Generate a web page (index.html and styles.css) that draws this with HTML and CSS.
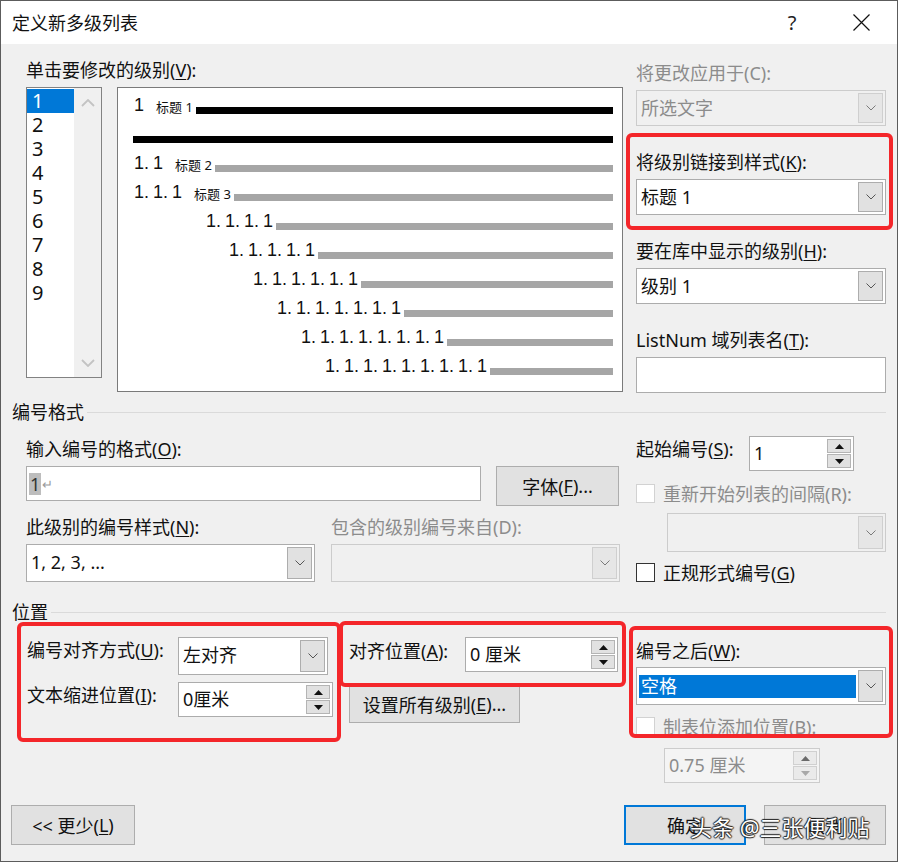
FILE: index.html
```html
<!DOCTYPE html>
<html lang="zh-CN">
<head>
<meta charset="utf-8">
<title>定义新多级列表</title>
<link rel="stylesheet" href="styles.css">
</head>
<body>
<div class="dialog">
  <div class="titlebar">
    <div class="title">定义新多级列表</div>
    <div class="tb-btn help">?</div>
    <div class="tb-btn close"><svg width="17" height="17" viewBox="0 0 17 17"><path d="M0.5 0.5 L16.5 16.5 M16.5 0.5 L0.5 16.5" stroke="#111" stroke-width="1.2" fill="none"/></svg></div>
  </div>

  <div class="content">
    <section class="top">
      <div class="top-left">
        <div class="label">单击要修改的级别(<u>V</u>):</div>
        <div class="top-row">
          <div class="levels">
            <ul class="level-list">
              <li class="sel">1</li><li>2</li><li>3</li><li>4</li><li>5</li><li>6</li><li>7</li><li>8</li><li>9</li>
            </ul>
            <div class="vscroll">
              <svg width="14" height="8" viewBox="0 0 14 8"><path d="M1 7 L7 1 L13 7" fill="none" stroke="#c3c3c3" stroke-width="1.8"/></svg>
              <svg width="14" height="8" viewBox="0 0 14 8"><path d="M1 1 L7 7 L13 1" fill="none" stroke="#c3c3c3" stroke-width="1.8"/></svg>
            </div>
          </div>
          <div class="preview">
            <div class="prow i1"><span class="pnum">1</span><span class="ptag">标题 1</span><span class="bar blk"></span></div>
            <div class="prow i2"><span class="bar blk"></span></div>
            <div class="prow i1"><span class="pnum">1. 1</span><span class="ptag">标题 2</span><span class="bar"></span></div>
            <div class="prow i1"><span class="pnum">1. 1. 1</span><span class="ptag">标题 3</span><span class="bar"></span></div>
            <div class="prow i4"><span class="pnum">1. 1. 1. 1</span><span class="bar"></span></div>
            <div class="prow i5"><span class="pnum">1. 1. 1. 1. 1</span><span class="bar"></span></div>
            <div class="prow i6"><span class="pnum">1. 1. 1. 1. 1. 1</span><span class="bar"></span></div>
            <div class="prow i7"><span class="pnum">1. 1. 1. 1. 1. 1. 1</span><span class="bar"></span></div>
            <div class="prow i8"><span class="pnum">1. 1. 1. 1. 1. 1. 1. 1</span><span class="bar"></span></div>
            <div class="prow i9"><span class="pnum">1. 1. 1. 1. 1. 1. 1. 1. 1</span><span class="bar"></span></div>
          </div>
        </div>
      </div>

      <div class="top-right">
        <div class="fgroup">
          <div class="label dis">将更改应用于(C):</div>
          <div class="combo dis"><span class="val">所选文字</span><span class="dd"><svg width="10" height="6" viewBox="0 0 10 6"><path d="M0.5 0.5 L5 5 L9.5 0.5" fill="none" stroke="#7a7a7a" stroke-width="1"/></svg></span></div>
        </div>
        <div class="fgroup">
          <div class="label">将级别链接到样式(<u>K</u>):</div>
          <div class="combo"><span class="val">标题 1</span><span class="dd"><svg width="10" height="6" viewBox="0 0 10 6"><path d="M0.5 0.5 L5 5 L9.5 0.5" fill="none" stroke="#555" stroke-width="1"/></svg></span></div>
        </div>
        <div class="fgroup">
          <div class="label">要在库中显示的级别(<u>H</u>):</div>
          <div class="combo"><span class="val">级别 1</span><span class="dd"><svg width="10" height="6" viewBox="0 0 10 6"><path d="M0.5 0.5 L5 5 L9.5 0.5" fill="none" stroke="#555" stroke-width="1"/></svg></span></div>
        </div>
        <div class="fgroup last">
          <div class="label">ListNum 域列表名(<u>T</u>):</div>
          <div class="textbox"></div>
        </div>
      </div>
    </section>

    <div class="sect sect-fmt"><span>编号格式</span></div>

    <section class="fmt">
      <div class="fmt-left">
        <div class="label lbl-enter">输入编号的格式(<u>O</u>):</div>
        <div class="enter-row">
          <div class="textbox fmtbox"><span class="hl">1</span><span class="ret">↵</span></div>
          <div class="btn font-btn">字体(<u>F</u>)...</div>
        </div>
        <div class="two-col">
          <div class="col">
            <div class="label">此级别的编号样式(<u>N</u>):</div>
            <div class="combo tall"><span class="val">1, 2, 3, ...</span><span class="dd"><svg width="10" height="6" viewBox="0 0 10 6"><path d="M0.5 0.5 L5 5 L9.5 0.5" fill="none" stroke="#555" stroke-width="1"/></svg></span></div>
          </div>
          <div class="col">
            <div class="label dis">包含的级别编号来自(D):</div>
            <div class="combo tall dis"><span class="val"></span><span class="dd"><svg width="10" height="6" viewBox="0 0 10 6"><path d="M0.5 0.5 L5 5 L9.5 0.5" fill="none" stroke="#7a7a7a" stroke-width="1"/></svg></span></div>
          </div>
        </div>
      </div>

      <div class="fmt-right">
        <div class="start-row">
          <div class="label start-lbl">起始编号(<u>S</u>):</div>
          <div class="spin start-spin"><span class="val">1</span>
            <span class="spin-btns">
              <span class="sb"><svg width="9" height="5" viewBox="0 0 9 5"><path d="M0 5 L4.5 0 L9 5Z" fill="#111"/></svg></span>
              <span class="sb"><svg width="9" height="5" viewBox="0 0 9 5"><path d="M0 0 L4.5 5 L9 0Z" fill="#111"/></svg></span>
            </span>
          </div>
        </div>
        <div class="check dis restart"><span class="box"></span><span>重新开始列表的间隔(R):</span></div>
        <div class="combo dis restart-combo"><span class="val"></span><span class="dd"><svg width="10" height="6" viewBox="0 0 10 6"><path d="M0.5 0.5 L5 5 L9.5 0.5" fill="none" stroke="#7a7a7a" stroke-width="1"/></svg></span></div>
        <div class="check legal"><span class="box"></span><span>正规形式编号(<u>G</u>)</span></div>
      </div>
    </section>

    <div class="sect sect-pos"><span>位置</span></div>

    <section class="pos">
      <div class="pos-left">
        <div class="prow2 r1">
          <div class="label plabel">编号对齐方式(<u>U</u>):</div>
          <div class="combo align-combo"><span class="val">左对齐</span><span class="dd"><svg width="10" height="6" viewBox="0 0 10 6"><path d="M0.5 0.5 L5 5 L9.5 0.5" fill="none" stroke="#555" stroke-width="1"/></svg></span></div>
        </div>
        <div class="prow2 r2">
          <div class="label plabel">文本缩进位置(<u>I</u>):</div>
          <div class="spin indent-spin"><span class="val">0厘米</span>
            <span class="spin-btns">
              <span class="sb"><svg width="9" height="5" viewBox="0 0 9 5"><path d="M0 5 L4.5 0 L9 5Z" fill="#111"/></svg></span>
              <span class="sb"><svg width="9" height="5" viewBox="0 0 9 5"><path d="M0 0 L4.5 5 L9 0Z" fill="#111"/></svg></span>
            </span>
          </div>
        </div>
      </div>

      <div class="pos-mid">
        <div class="prow2 r1">
          <div class="label mlabel">对齐位置(<u>A</u>):</div>
          <div class="spin at-spin"><span class="val">0 厘米</span>
            <span class="spin-btns">
              <span class="sb"><svg width="9" height="5" viewBox="0 0 9 5"><path d="M0 5 L4.5 0 L9 5Z" fill="#111"/></svg></span>
              <span class="sb"><svg width="9" height="5" viewBox="0 0 9 5"><path d="M0 0 L4.5 5 L9 0Z" fill="#111"/></svg></span>
            </span>
          </div>
        </div>
        <div class="btn all-btn">设置所有级别(<u>E</u>)...</div>
      </div>

      <div class="pos-right">
        <div class="label after-lbl">编号之后(<u>W</u>):</div>
        <div class="combo after-combo"><span class="val"><span class="selv">空格</span></span><span class="dd"><svg width="10" height="6" viewBox="0 0 10 6"><path d="M0.5 0.5 L5 5 L9.5 0.5" fill="none" stroke="#555" stroke-width="1"/></svg></span></div>
        <div class="check dis tabchk"><span class="box"></span><span>制表位添加位置(B):</span></div>
        <div class="spin dis tab-spin"><span class="val">0.75 厘米</span>
          <span class="spin-btns">
            <span class="sb"><svg width="9" height="5" viewBox="0 0 9 5"><path d="M0 5 L4.5 0 L9 5Z" fill="#6a6a6a"/></svg></span>
            <span class="sb"><svg width="9" height="5" viewBox="0 0 9 5"><path d="M0 0 L4.5 5 L9 0Z" fill="#a8a8a8"/></svg></span>
          </span>
        </div>
      </div>
    </section>

    <div class="footer">
      <div class="btn less-btn">&lt;&lt; 更少(<u>L</u>)</div>
      <div class="footer-right">
        <div class="btn ok-btn">确定</div>
        <div class="btn cancel-btn">取消</div>
      </div>
    </div>
  </div>

  <div class="mark m0"></div>
  <div class="mark m1"></div>
  <div class="mark m2"></div>
  <div class="mark m3"></div>
  <div class="watermark">头条 @三张便利贴</div>
</div>
</body>
</html>
```

FILE: styles.css
```css
* { box-sizing: border-box; margin: 0; padding: 0; }
html, body { background: #ffffff; }
body {
  margin: 0;
  font-family: "Noto Sans", "Noto Sans CJK SC", sans-serif;
  font-size: 18px;
  color: #111;
}
ul { list-style: none; }
u { text-decoration: underline; text-underline-offset: 2px; text-decoration-thickness: 1px; }

.dialog {
  position: relative;
  width: 898px;
  height: 862px;
  background: #f0f0f0;
  border: 1px solid #5c5c5c;
  overflow: hidden;
}

/* title bar */
.titlebar {
  height: 43px;
  background: #ffffff;
  display: flex;
  align-items: center;
  padding-left: 11px;
  padding-right: 13px;
}
.title { flex: 1; font-size: 18px; line-height: 24px; }
.tb-btn {
  width: 46px;
  height: 43px;
  display: flex;
  align-items: center;
  justify-content: center;
}
.help { font-size: 20px; color: #222; font-family: "Noto Sans", sans-serif; margin-right: 23px; }

.content { padding: 0 11px; }

.label { line-height: 24px; height: 24px; white-space: nowrap; }
.dis { color: #8c8c8c; }

/* top section */
.top { display: flex; padding-left: 14px; padding-top: 14px; gap: 13px; }
.top-left { width: 597px; }
.top-left > .label { margin-bottom: 5px; }
.top-row { display: flex; gap: 15px; align-items: flex-start; }

.levels {
  width: 76px;
  height: 291px;
  border: 1px solid #828282;
  background: #fff;
  display: flex;
}
.level-list { width: 47px; padding-top: 1px; background: #fff; }
.level-list li {
  height: 24px;
  line-height: 24px;
  padding-left: 5px;
  font-size: 20px;
  font-family: "Noto Sans", sans-serif;
}
.level-list li.sel { background: #0078d7; color: #fff; }
.vscroll {
  flex: 1;
  background: #f0f0f0;
  display: flex;
  flex-direction: column;
  justify-content: space-between;
  align-items: center;
  padding: 11px 0 10px;
}

.preview {
  width: 506px;
  height: 305px;
  border: 1px solid #7a7a7a;
  background: #fff;
  padding-right: 9px;
}
.prow { display: flex; align-items: flex-end; height: 29px; }
.prow.i1 { padding-left: 16px; }
.prow.i2 { padding-left: 15px; }
.prow.i4 { padding-left: 88px; }
.prow.i5 { padding-left: 111px; }
.prow.i6 { padding-left: 135px; }
.prow.i7 { padding-left: 159px; }
.prow.i8 { padding-left: 183px; }
.prow.i9 { padding-left: 207px; }
.pnum {
  font-family: "Liberation Sans", Arial, sans-serif;
  font-size: 18px;
  line-height: 20px;
  margin-bottom: 2px;
  white-space: pre;
  word-spacing: -1px;
}
.ptag {
  font-size: 13px;
  line-height: 16px;
  margin-left: 12px;
  margin-bottom: 2px;
  white-space: pre;
}
.bar {
  flex: 1;
  height: 7px;
  margin-bottom: 3px;
  margin-left: 3px;
  background: #a6a6a6;
}
.bar.blk { background: #000; }
.prow.i2 .bar { margin-left: 0; }

.top-right { width: 250px; padding-top: 3px; }
.fgroup { margin-bottom: 24px; }
.fgroup.last { margin-bottom: 0; }
.fgroup .label { margin-bottom: 5px; }

/* controls */
.combo {
  display: flex;
  height: 36px;
  border: 1px solid #acacac;
  background: #fff;
  padding: 2px;
}
.combo.tall { height: 38px; }
.combo .val {
  flex: 1;
  line-height: 30px;
  padding-left: 2px;
  white-space: nowrap;
}
.combo .dd {
  width: 25px;
  background: #e1e1e1;
  border: 1px solid #adadad;
  display: flex;
  align-items: center;
  justify-content: center;
}
.combo.dis { background: #f0f0f0; border-color: #cccccc; }
.combo.dis .val { color: #8c8c8c; }
.combo.dis .dd { background: #e6e6e6; border-color: #cfcfcf; }

.textbox {
  height: 36px;
  border: 1px solid #acacac;
  background: #fff;
}

.spin {
  display: flex;
  height: 35px;
  border: 1px solid #acacac;
  background: #fff;
  padding: 2px 2px 2px 0;
}
.spin .val { flex: 1; line-height: 29px; padding-left: 4px; white-space: nowrap; }
.spin-btns { width: 24px; display: flex; flex-direction: column; gap: 1px; }
.sb {
  flex: 1;
  background: #e1e1e1;
  border: 1px solid #b4b4b4;
  display: flex;
  align-items: center;
  justify-content: center;
}
.spin.dis { background: #f4f4f4; border-color: #cccccc; }
.spin.dis .val { color: #8c8c8c; }
.spin.dis .sb { background: #eaeaea; border-color: #d0d0d0; }

.btn {
  height: 40px;
  background: #e1e1e1;
  border: 1px solid #adadad;
  display: flex;
  align-items: center;
  justify-content: center;
  white-space: nowrap;
}

.check { display: flex; align-items: center; height: 24px; gap: 8px; white-space: nowrap; }
.check .box {
  width: 19px;
  height: 19px;
  border: 1px solid #333;
  background: #fff;
}
.check.dis .box { border-color: #d2d2d2; }

/* section headers */
.sect {
  display: flex;
  align-items: center;
  height: 24px;
  line-height: 24px;
}
.sect::after {
  content: "";
  flex: 1;
  height: 1px;
  background: #dadada;
  margin-left: 3px;
}
.sect-fmt { margin-top: 7px; }
.sect-pos { margin-top: 16px; }

/* format section */
.fmt { display: flex; padding-left: 14px; gap: 16px; }
.fmt-left { width: 594px; }
.lbl-enter { margin-top: 13px; }
.enter-row { display: flex; gap: 15px; margin-top: 5px; align-items: flex-start; }
.fmtbox { width: 455px; height: 35px; padding: 4px 2px; display: flex; align-items: center; }
.hl { background: #bdbdbd; color: #333; line-height: 22px; padding: 0 1px; }
.ret { font-size: 13px; color: #9a9a9a; margin-left: 1px; }
.font-btn { width: 123px; }
.two-col { display: flex; gap: 16px; margin-top: 9px; }
.two-col .col { width: 289px; }
.two-col .label { margin-bottom: 5px; }

.fmt-right { width: 250px; }
.start-row { display: flex; margin-top: 12px; align-items: flex-start; }
.start-lbl { width: 113px; margin-top: 1px; }
.start-spin { width: 105px; }
.restart { margin-top: 10px; }
.restart-combo { margin-top: 8px; margin-left: 31px; height: 39px; }
.legal { margin-top: 8px; }

/* position section */
.pos { display: flex; padding-left: 15px; }
.pos-left { width: 306px; }
.prow2 { display: flex; align-items: flex-start; }
.pos-left .r1, .pos-mid .r1 { margin-top: 13px; }
.pos-left .r2 { margin-top: 7px; }
.plabel { width: 151px; margin-top: 1px; }
.align-combo { width: 150px; height: 38px; }
.indent-spin { width: 155px; }
.pos-mid { width: 269px; margin-left: 16px; }
.mlabel { width: 116px; margin-top: 2px; }
.at-spin { width: 153px; }
.all-btn { width: 171px; height: 39px; margin-top: 12px; }
.pos-right { width: 250px; margin-left: 18px; }
.after-lbl { margin-top: 15px; }
.after-combo { margin-top: 4px; height: 38px; }
.after-combo .val { display: flex; align-items: center; padding-left: 0; }
.selv {
  display: block;
  width: 100%;
  margin-right: 2px;
  background: #0078d7;
  color: #fff;
  line-height: 23px;
  padding-left: 2px;
}
.tabchk { margin-top: 9px; }
.tab-spin { margin-top: 10px; margin-left: 28px; width: 156px; }

/* footer */
.footer {
  display: flex;
  justify-content: space-between;
  margin-top: 22px;
  margin-left: -1px;
}
.less-btn { width: 124px; }
.footer-right { display: flex; gap: 18px; }
.ok-btn { width: 122px; border: 2px solid #0078d7; }
.cancel-btn { width: 122px; }

/* annotation overlays */
.mark {
  position: absolute;
  border: 4px solid #f4262a;
  border-radius: 6px;
}
.m0 { left: 625px; top: 132px; width: 267px; height: 97px; }
.m1 { left: 16px; top: 621px; width: 324px; height: 120px; }
.m2 { left: 338px; top: 620px; width: 287px; height: 66px; }
.m3 { left: 628px; top: 625px; width: 264px; height: 112px; }

.watermark {
  position: absolute;
  left: 689px;
  top: 813px;
  font-size: 22px;
  line-height: 26px;
  color: #ffffff;
  white-space: nowrap;
  text-shadow: 1px 0 1px #222, -1px 0 1px #222, 0 1px 1px #222, 0 -1px 1px #222;
}
```
